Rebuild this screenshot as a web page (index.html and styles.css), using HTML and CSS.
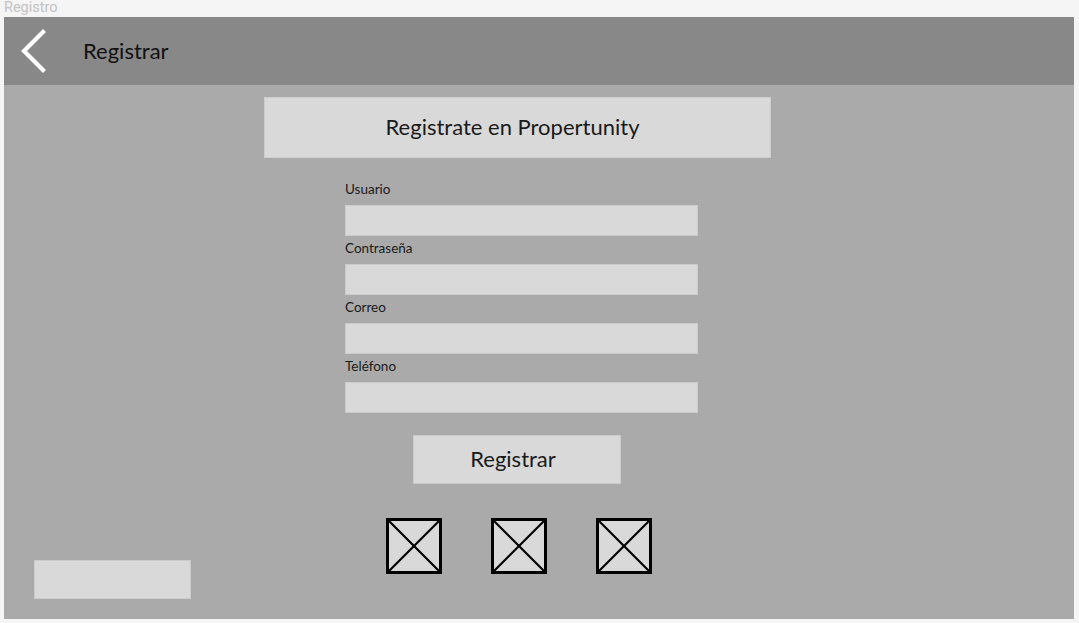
FILE: index.html
```html
<!DOCTYPE html>
<html lang="es">
<head>
<meta charset="utf-8">
<title>Registro</title>
<link rel="stylesheet" href="styles.css">
</head>
<body>
<div class="page-title">Registro</div>
<div class="frame">
  <header class="topbar">
    <svg class="back" width="30" height="44" viewBox="0 0 30 44" aria-hidden="true">
      <polyline points="22,3 3,22 22,41" fill="none" stroke="#ffffff" stroke-width="4.2" stroke-linecap="square"/>
    </svg>
    <span class="topbar-title">Registrar</span>
  </header>
  <main class="content">
    <div class="hero">Registrate en Propertunity</div>
    <form class="form">
      <div class="field"><label class="label">Usuario</label><div class="input"></div></div>
      <div class="field"><label class="label">Contraseña</label><div class="input"></div></div>
      <div class="field"><label class="label">Correo</label><div class="input"></div></div>
      <div class="field"><label class="label">Teléfono</label><div class="input"></div></div>
    </form>
    <div class="button">Registrar</div>
    <div class="icons">
      <svg class="ph" viewBox="0 0 56 56"><rect x="1.5" y="1.5" width="53" height="53" fill="#d9d9d9" stroke="#000" stroke-width="3"/><line x1="2" y1="2" x2="54" y2="54" stroke="#000" stroke-width="2.2"/><line x1="54" y1="2" x2="2" y2="54" stroke="#000" stroke-width="2.2"/></svg>
      <svg class="ph" viewBox="0 0 56 56"><rect x="1.5" y="1.5" width="53" height="53" fill="#d9d9d9" stroke="#000" stroke-width="3"/><line x1="2" y1="2" x2="54" y2="54" stroke="#000" stroke-width="2.2"/><line x1="54" y1="2" x2="2" y2="54" stroke="#000" stroke-width="2.2"/></svg>
      <svg class="ph" viewBox="0 0 56 56"><rect x="1.5" y="1.5" width="53" height="53" fill="#d9d9d9" stroke="#000" stroke-width="3"/><line x1="2" y1="2" x2="54" y2="54" stroke="#000" stroke-width="2.2"/><line x1="54" y1="2" x2="2" y2="54" stroke="#000" stroke-width="2.2"/></svg>
    </div>
    <div class="corner-box"></div>
  </main>
</div>
</body>
</html>
```
FILE: styles.css
```css
html, body {
  margin: 0;
  padding: 0;
  background: #f5f5f5;
}
body {
  font-family: Lato, "Noto Sans", sans-serif;
  color: #1a1a1a;
}
.page-title {
  height: 17px;
  padding-left: 4px;
  font-family: Roboto, "Noto Sans", sans-serif;
  font-size: 14.5px;
  line-height: 15px;
  color: #c2c2c2;
}
.frame {
  margin-left: 4px;
  width: 1070px;
  height: 602px;
  display: flex;
  flex-direction: column;
}
.topbar {
  height: 68px;
  background: #888888;
  display: flex;
  align-items: center;
  flex-shrink: 0;
}
.back {
  margin-left: 17px;
}
.topbar-title {
  margin-left: 32px;
  font-size: 22px;
  color: #111;
  margin-top: -2px;
}
.content {
  position: relative;
  flex: 1;
  background: #aaaaaa;
  display: flex;
  flex-direction: column;
  align-items: flex-start;
}
.hero {
  margin-top: 12px;
  margin-left: 260px;
  width: 507px;
  height: 61px;
  background: #d9d9d9;
  border: 1px solid #cdcdcd;
  display: flex;
  align-items: center;
  justify-content: center;
  font-size: 22px;
  color: #1a1a1a;
  padding: 0 10px 3px 0;
  box-sizing: border-box;
}
.form {
  margin: 21px 0 0 341px;
  display: flex;
  flex-direction: column;
  gap: 2px;
}
.field {
  display: flex;
  flex-direction: column;
}
.label {
  font-size: 13.5px;
  line-height: 20px;
  color: #1a1a1a;
}
.input {
  margin-top: 6px;
  width: 353px;
  height: 31px;
  background: #d9d9d9;
  border: 1px solid #cbcbcb;
  box-sizing: border-box;
}
.button {
  margin: 22px 0 0 409px;
  width: 208px;
  height: 49px;
  background: #d9d9d9;
  border: 1px solid #cbcbcb;
  box-sizing: border-box;
  display: flex;
  align-items: center;
  justify-content: center;
  font-size: 22px;
  color: #1a1a1a;
  padding: 0 8px 2px 0;
}
.icons {
  margin: 34px 0 0 382px;
  display: flex;
  gap: 49px;
}
.ph {
  width: 56px;
  height: 56px;
  display: block;
}
.corner-box {
  position: absolute;
  left: 30px;
  bottom: 20px;
  width: 157px;
  height: 39px;
  background: #d9d9d9;
  border: 1px solid #cbcbcb;
  box-sizing: border-box;
}
```
